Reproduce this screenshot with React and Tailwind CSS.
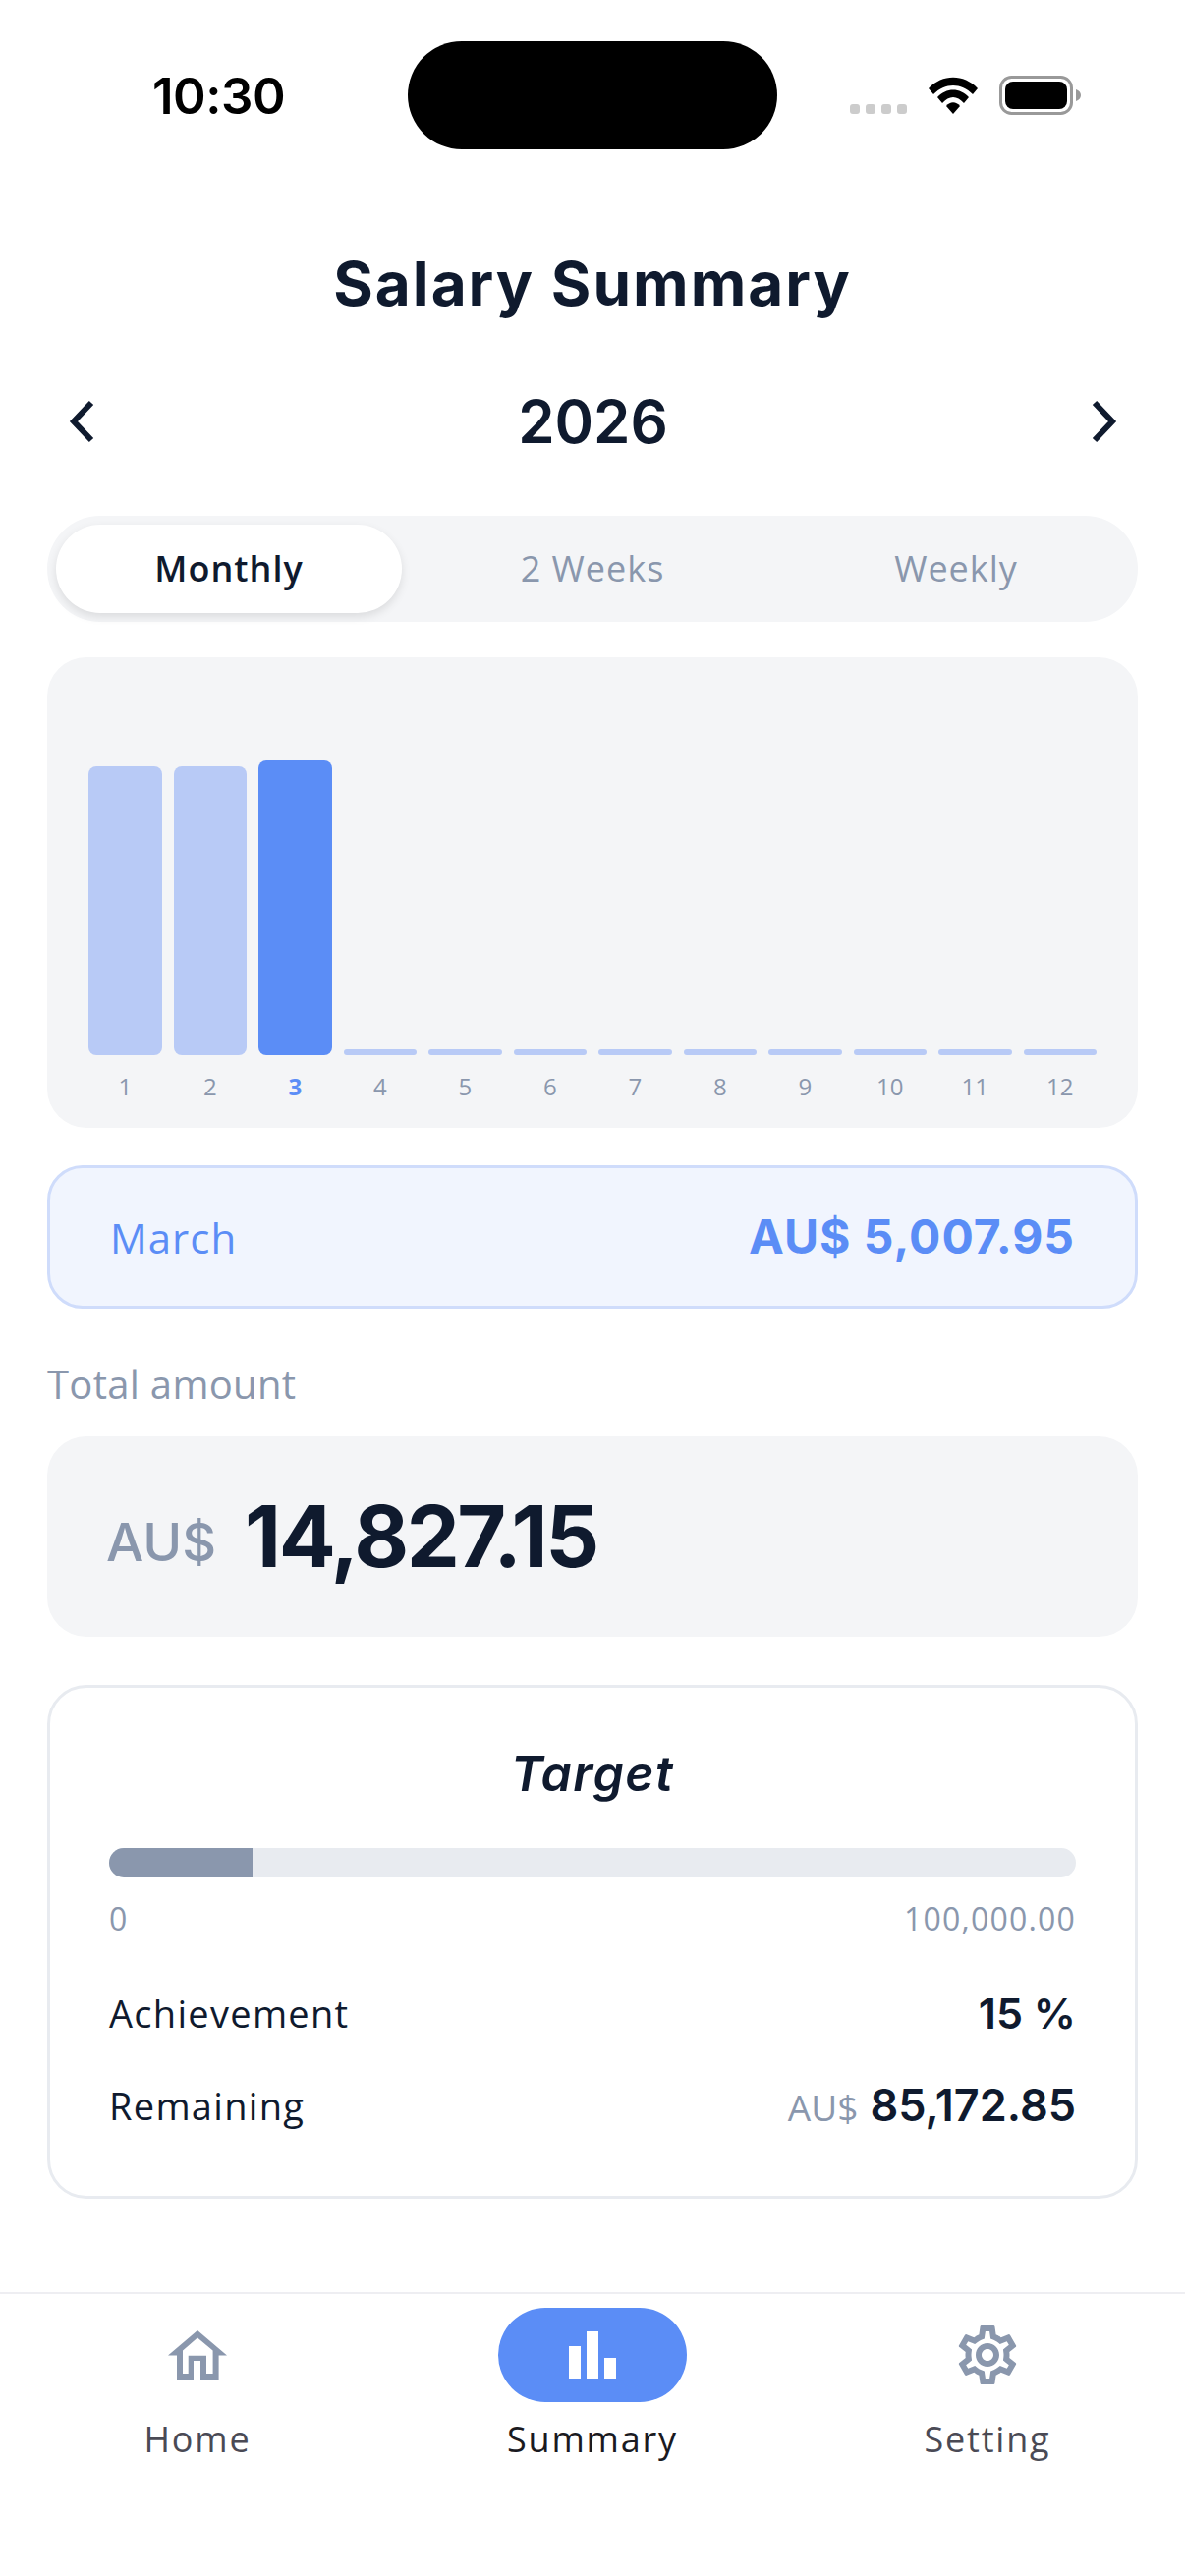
import { MdOutlineSettings } from "react-icons/md";

const sans = "font-['Open_Sans','Noto_Sans',sans-serif]";
const display = "font-['Inter','Liberation_Sans',sans-serif]";

const months = [
  { n: 1, h: "h-[294px]" },
  { n: 2, h: "h-[294px]" },
  { n: 3, h: "h-[300px]", active: true },
  { n: 4 }, { n: 5 }, { n: 6 }, { n: 7 }, { n: 8 }, { n: 9 }, { n: 10 }, { n: 11 }, { n: 12 },
];

const StatusBar = () => (
  <div className="relative h-[251px] shrink-0">
    <span className="absolute left-[155px] top-[66px] font-['Inter',sans-serif] text-[51px] leading-[64px] font-semibold text-black tracking-[-0.5px]">10:30</span>
    <div className="absolute left-[415px] top-[42px] w-[376px] h-[110px] rounded-[55px] bg-black" />
    <div className="absolute left-[865px] top-[106px] flex gap-[6px]">
      {[0, 1, 2, 3].map((i) => (
        <div key={i} className="w-[10px] h-[10px] rounded-[3px] bg-[#cccccc]" />
      ))}
    </div>
    <svg className="absolute left-[945px] top-[78px]" width="50" height="38" viewBox="0 0 50 38">
      <path d="M0 12 C14 -3 36 -3 50 12 L45 18 C33 6 17 6 5 18 Z" fill="#000" />
      <path d="M9 21 C18 11 32 11 41 21 L36 27 C29 19 21 19 14 27 Z" fill="#000" />
      <path d="M18 30 C22 25 28 25 32 30 L25 38 Z" fill="#000" />
    </svg>
    <svg className="absolute left-[1017px] top-[77px]" width="84" height="40" viewBox="0 0 84 40">
      <rect x="1.5" y="1.5" width="72" height="37" rx="11" fill="#fff" stroke="#999" strokeWidth="3" />
      <rect x="6" y="6" width="63" height="28" rx="8" fill="#000" />
      <path d="M78 14 C81 15 83 17 83 20 C83 23 81 25 78 26 Z" fill="#999" />
    </svg>
  </div>
);

const Chevron = ({ dir }) => (
  <svg width="28" height="44" viewBox="0 0 28 44" fill="none">
    <path d={dir === "left" ? "M24 3 L6 22 L24 41" : "M4 3 L22 22 L4 41"} stroke="#0f1a2e" strokeWidth="6" />
  </svg>
);

const Tabs = () => (
  <div className="mt-[66px] h-[108px] rounded-[54px] bg-[#f4f5f7] grid grid-cols-3 items-center">
    <div className="mx-[9px] h-[90px] rounded-[45px] bg-white shadow-[0_4px_10px_rgba(0,0,0,0.1)] flex items-center justify-center text-[36px] font-semibold text-[#0f1a2e] tracking-[1px]">Monthly</div>
    <div className="text-center text-[36px] text-[#8a97ad] tracking-[1px]">2 Weeks</div>
    <div className="text-center text-[36px] text-[#8a97ad] tracking-[1px]">Weekly</div>
  </div>
);

const Chart = () => (
  <div className="mt-[36px] h-[479px] rounded-[40px] bg-[#f4f5f7] px-[42px] pt-[105px]">
    <div className="h-[300px] flex items-end gap-[12px]">
      {months.map((m) => (
        <div
          key={m.n}
          className={`flex-1 rounded-[8px] ${m.h || "h-[6px]"} ${m.active ? "bg-[#5b8df6]" : "bg-[#b8caf6]"}`}
        />
      ))}
    </div>
    <div className="mt-[16px] flex gap-[12px]">
      {months.map((m) => (
        <div key={m.n} className={`flex-1 text-center text-[24px] leading-[32px] ${m.active ? "font-bold text-[#5b8df6]" : "text-[#8a97ad]"}`}>{m.n}</div>
      ))}
    </div>
  </div>
);

const Row = ({ label, children }) => (
  <div className="flex items-center justify-between h-[64px]">
    <span className="text-[38px] text-[#0f1a2e] tracking-[1.3px]">{label}</span>
    {children}
  </div>
);

const NavItem = ({ label, active, children }) => (
  <div className="flex-1 flex flex-col items-center">
    <div className={`w-[192px] h-[96px] rounded-[48px] flex items-center justify-center ${active ? "bg-[#5b8df6]" : ""}`}>{children}</div>
    <span className={`mt-[17px] text-[36px] leading-[42px] tracking-[1.8px] ${active ? "text-[#1a1a1f]" : "text-[#4a4a55]"}`}>{label}</span>
  </div>
);

export default function App() {
  return (
    <div className={`w-[1206px] h-[2622px] bg-white flex flex-col ${sans}`}>
      <StatusBar />
      <h1 className={`text-center text-[62px] leading-[76px] font-bold text-[#0f1a2e] tracking-[2px] ${display}`}>Salary Summary</h1>

      <main className="px-[48px] flex-1">
        <div className="mt-[72px] pl-[21px] pr-[20px] flex items-center justify-between h-[60px]">
          <Chevron dir="left" />
          <span className={`text-[60px] font-semibold text-[#0f1a2e] ${display}`}>2026</span>
          <Chevron dir="right" />
        </div>

        <Tabs />
        <Chart />

        <div className="mt-[38px] h-[146px] rounded-[36px] border-[3px] border-[#cfdcfb] bg-[#f1f5fe] px-[61px] flex items-center justify-between">
          <span className="text-[42px] font-medium text-[#5b8df6] tracking-[1px]">March</span>
          <span className={`text-[48px] font-bold text-[#5b8df6] tracking-[1px] ${display}`}>AU$ 5,007.95</span>
        </div>

        <div className="mt-[50px] text-[40px] leading-[54px] text-[#8a97ad] tracking-[0.3px]">Total amount</div>

        <div className="mt-[26px] h-[204px] rounded-[40px] bg-[#f4f5f7] px-[60px] flex items-center gap-[29px]">
          <span className={`mt-[10px] text-[54px] font-medium text-[#8a97ad] ${display}`}>AU$</span>
          <span className={`text-[86px] font-bold text-[#0f1a2e] tracking-[-2.5px] ${display}`}>14,827.15</span>
        </div>

        <div className="mt-[49px] h-[523px] rounded-[40px] border-[3px] border-[#e8ebf0] px-[60px] pt-[59px]">
          <div className={`text-center text-[50px] leading-[56px] italic font-semibold text-[#0f1a2e] tracking-[1.5px] ${display}`}>Target</div>
          <div className="mt-[48px] h-[30px] rounded-[15px] bg-[#e8ebf0] overflow-hidden">
            <div className="h-full w-[146px] bg-[#8a97ad]" />
          </div>
          <div className="mt-[24px] flex justify-between text-[32px] leading-[36px] text-[#8a97ad] tracking-[1.2px]">
            <span>0</span>
            <span>100,000.00</span>
          </div>
          <div className="mt-[46px]">
            <Row label="Achievement">
              <span className={`text-[43px] font-semibold text-[#0f1a2e] ${display}`}>15 %</span>
            </Row>
            <div className="mt-[30px]">
              <Row label="Remaining">
                <span className="flex items-baseline gap-[12px]">
                  <span className="text-[37px] text-[#8a97ad]">AU$</span>
                  <span className={`text-[45px] font-semibold text-[#0f1a2e] ${display}`}>85,172.85</span>
                </span>
              </Row>
            </div>
          </div>
        </div>
      </main>

      <nav className="h-[289px] border-t-2 border-[#eeeef2] pt-[14px] flex">
        <NavItem label="Home">
          <svg width="60" height="51" viewBox="0 0 60 51" fill="#8a97ad" fillRule="evenodd">
            <path d="M30 0 L60 25.5 H51.6 V50 H33 V31 H26 V50 H9 V25.5 H0 Z M30 7.5 L45.6 20.5 V44 H39 V25.7 H20.7 V44 H15 V20.5 Z" />
          </svg>
        </NavItem>
        <NavItem label="Summary" active>
          <svg width="48" height="48" viewBox="0 0 48 48" fill="#fff">
            <rect x="0" y="15" width="12" height="33" />
            <rect x="18" y="0" width="12" height="48" />
            <rect x="36" y="27" width="12" height="21" />
          </svg>
        </NavItem>
        <NavItem label="Setting">
          <MdOutlineSettings size={72} color="#8a97ad" />
        </NavItem>
      </nav>
    </div>
  );
}
